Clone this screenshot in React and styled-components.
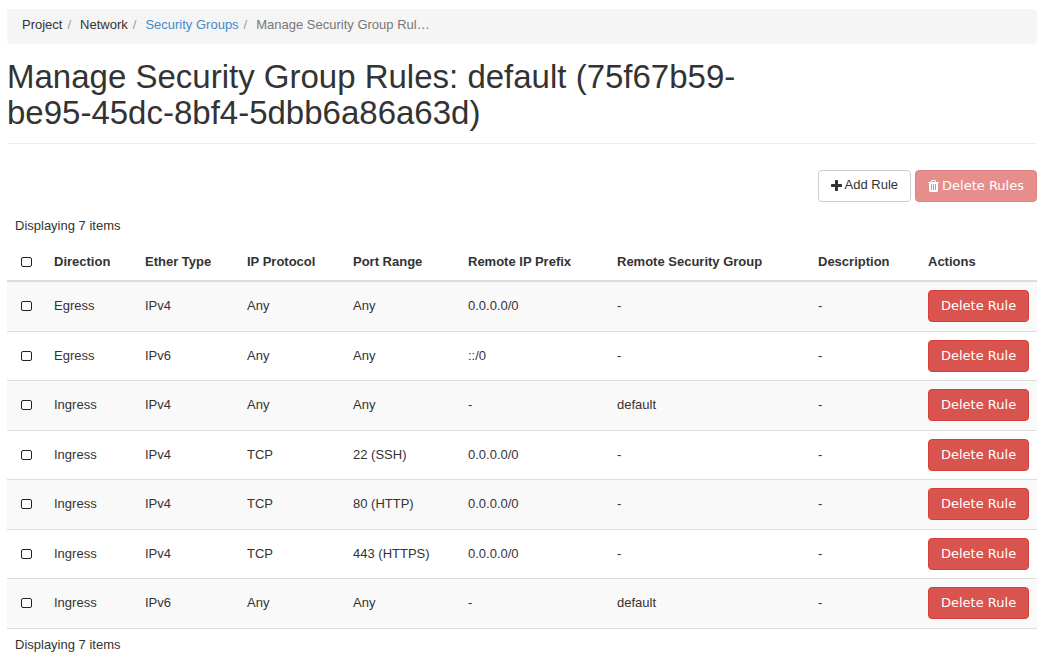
import React from "react";
import styled, { createGlobalStyle } from "styled-components";

const GlobalStyle = createGlobalStyle`
  *, *::before, *::after { box-sizing: border-box; }
  body {
    margin: 0;
    background: #fff;
    color: #333;
    font-family: "Liberation Sans", Arial, sans-serif;
    font-size: 13px;
    line-height: 18px;
  }
`;

const Page = styled.main`
  padding: 9px 10px 0 7px;
`;

const Breadcrumb = styled.ol`
  display: flex;
  list-style: none;
  margin: 0;
  padding: 7px 15px 10px;
  background: #f5f5f5;
  border-radius: 4px;
`;

const Crumb = styled.li`
  color: ${(p) => (p.$current ? "#777" : "#333")};
  &:not(:first-child)::before {
    content: "/";
    padding: 0 9px 0 5px;
    color: #999;
  }
`;

const CrumbLink = styled.a`
  color: #428bca;
  text-decoration: none;
`;

const PageHeader = styled.header`
  padding: 15px 0 12px;
  border-bottom: 1px solid #eee;
`;

const Title = styled.h1`
  margin: 0;
  max-width: 772px;
  font-size: 33px;
  font-weight: 400;
  line-height: 36px;
`;

const Toolbar = styled.div`
  display: flex;
  justify-content: flex-end;
  gap: 4px;
  padding: 26px 0 15px;
`;

const Button = styled.button`
  display: inline-flex;
  align-items: center;
  justify-content: center;
  gap: 3px;
  height: 32px;
  padding: ${(p) => (p.$danger ? "0 12px" : "0 12px 2px")};
  border: 1px solid ${(p) => (p.$danger ? "#d43f3a" : "#ccc")};
  border-radius: 4px;
  background: ${(p) => (p.$danger ? "#d9534f" : "#fff")};
  color: ${(p) => (p.$danger ? "#fff" : "#333")};
  font-family: ${(p) => (p.$danger ? '"DejaVu Sans", sans-serif' : "inherit")};
  font-size: 13px;
  line-height: 18px;
  white-space: nowrap;
  &:disabled { opacity: 0.65; }
`;

const Count = styled.div`
  padding: 0 8px;
`;

const Table = styled.table`
  width: 100%;
  margin: 8px 0 7px;
  border-collapse: collapse;
  table-layout: fixed;
`;

const Row = styled.tr`
  height: 49px;
  border-bottom: 1px solid #ddd;
  &:nth-child(odd) {
    height: 50px;
    background: #f9f9f9;
  }
`;

const HeadCell = styled.th`
  padding: 10px 8px 9px;
  border-bottom: 2px solid #ddd;
  text-align: left;
  vertical-align: top;
`;

const Cell = styled.td`
  padding: ${(p) => (p.$action ? "8px" : "15px 8px 8px")};
  vertical-align: top;
`;

const Checkbox = styled.input`
  appearance: none;
  display: block;
  width: 11px;
  height: 10px;
  margin: 4px 0 0 6px;
  border: 1px solid #222;
  border-radius: 2px;
  background: #fff;
  &:checked { background: #428bca; }
`;

const PlusIcon = () => (
  <svg width="11" height="11" viewBox="0 0 1408 1408" fill="currentColor" aria-hidden="true">
    <path d="M1408 608v192q0 40-28 68t-68 28H896v416q0 40-28 68t-68 28H608q-40 0-68-28t-28-68V896H96q-40 0-68-28T0 800V608q0-40 28-68t68-28h416V96q0-40 28-68t68-28h192q40 0 68 28t28 68v416h416q40 0 68 28t28 68z" />
  </svg>
);

const TrashIcon = () => (
  <svg width="11" height="12" viewBox="0 0 1408 1536" fill="currentColor" aria-hidden="true">
    <path fillRule="evenodd" d="M512 1248V544q0-32-32-32h-64q-32 0-32 32v704q0 32 32 32h64q32 0 32-32zm256 0V544q0-32-32-32h-64q-32 0-32 32v704q0 32 32 32h64q32 0 32-32zm256 0V544q0-32-32-32h-64q-32 0-32 32v704q0 32 32 32h64q32 0 32-32zM480 256h448l-48-117q-7-9-17-11H546q-10 2-17 11zm928 32v64q0 32-32 32h-96v948q0 83-47 143.500t-113 60.500H288q-66 0-113-58.500T128 1336V384H32q-32 0-32-32v-64q0-32 32-32h309l70-167q15-37 54-63t79-26h320q40 0 79 26t54 63l70 167h309q32 0 32 32z" />
  </svg>
);

const columns = [
  { label: "Direction", width: "91px" },
  { label: "Ether Type", width: "102px" },
  { label: "IP Protocol", width: "106px" },
  { label: "Port Range", width: "115px" },
  { label: "Remote IP Prefix", width: "149px" },
  { label: "Remote Security Group", width: "201px" },
  { label: "Description", width: "110px" },
  { label: "Actions", width: "117px" },
];

const rules = [
  ["Egress", "IPv4", "Any", "Any", "0.0.0.0/0", "-", "-"],
  ["Egress", "IPv6", "Any", "Any", "::/0", "-", "-"],
  ["Ingress", "IPv4", "Any", "Any", "-", "default", "-"],
  ["Ingress", "IPv4", "TCP", "22 (SSH)", "0.0.0.0/0", "-", "-"],
  ["Ingress", "IPv4", "TCP", "80 (HTTP)", "0.0.0.0/0", "-", "-"],
  ["Ingress", "IPv4", "TCP", "443 (HTTPS)", "0.0.0.0/0", "-", "-"],
  ["Ingress", "IPv6", "Any", "Any", "-", "default", "-"],
];

export default function App() {
  return (
    <>
      <GlobalStyle />
      <Page>
        <nav aria-label="Breadcrumb">
          <Breadcrumb>
            <Crumb>Project</Crumb>
            <Crumb>Network</Crumb>
            <Crumb><CrumbLink href="#security-groups">Security Groups</CrumbLink></Crumb>
            <Crumb $current aria-current="page">Manage Security Group Rul…</Crumb>
          </Breadcrumb>
        </nav>
        <PageHeader>
          <Title>Manage Security Group Rules: default (75f67b59-be95-45dc-8bf4-5dbb6a86a63d)</Title>
        </PageHeader>
        <Toolbar>
          <Button type="button"><PlusIcon />Add Rule</Button>
          <Button type="button" $danger disabled><TrashIcon />Delete Rules</Button>
        </Toolbar>
        <Count>Displaying 7 items</Count>
        <Table>
          <colgroup>
            <col style={{ width: "39px" }} />
            {columns.map((c) => <col key={c.label} style={{ width: c.width }} />)}
          </colgroup>
          <thead>
            <tr>
              <HeadCell><Checkbox type="checkbox" aria-label="Select all rules" /></HeadCell>
              {columns.map((c) => <HeadCell key={c.label} scope="col">{c.label}</HeadCell>)}
            </tr>
          </thead>
          <tbody>
            {rules.map((rule, i) => (
              <Row key={i}>
                <Cell><Checkbox type="checkbox" aria-label={`Select rule ${i + 1}`} /></Cell>
                {rule.map((value, j) => <Cell key={j}>{value}</Cell>)}
                <Cell $action><Button type="button" $danger>Delete Rule</Button></Cell>
              </Row>
            ))}
          </tbody>
        </Table>
        <Count>Displaying 7 items</Count>
      </Page>
    </>
  );
}
